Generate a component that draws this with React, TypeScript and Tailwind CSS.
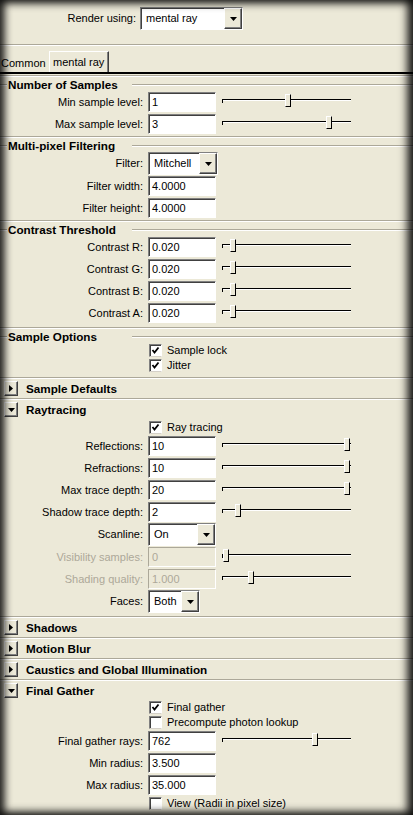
import React from "react";

function Etched({ className = "" }: { className?: string }) {
  return <div className={`h-[2px] border-t border-b border-t-[#aca899] border-b-white ${className}`} />;
}

function DownTri() {
  return (
    <svg width="7" height="4" viewBox="0 0 7 4">
      <polygon points="0,0 7,0 3.5,4" fill="#000" />
    </svg>
  );
}

function RightTri() {
  return (
    <svg width="4" height="7" viewBox="0 0 4 7">
      <polygon points="0,0 4,3.5 0,7" fill="#000" />
    </svg>
  );
}

function Field({ value, disabled = false }: { value: string; disabled?: boolean }) {
  return (
    <div
      className={
        disabled
          ? "w-[68px] h-[20px] border border-t-[#aca899] border-l-[#aca899] border-r-white border-b-white bg-[#ece9d8] text-[#aca899] pl-[3px] flex items-center text-[11px] leading-none"
          : "w-[68px] h-[20px] border border-t-[#808080] border-l-[#808080] border-r-white border-b-white shadow-[inset_1px_1px_0_#404040] bg-white text-black pl-[3px] flex items-center text-[11px] leading-none"
      }
    >
      {value}
    </div>
  );
}

function Select({ value, w }: { value: string; w: string }) {
  return (
    <div
      className={`${w} h-[23px] flex border border-t-[#808080] border-l-[#808080] border-r-white border-b-white shadow-[inset_1px_1px_0_#404040] bg-white`}
    >
      <span className="flex-1 pl-[5px] flex items-center text-[11px] leading-none">{value}</span>
      <span className="w-[18px] h-full bg-[#ece9d8] border border-t-white border-l-white border-r-[#404040] border-b-[#404040] shadow-[inset_-1px_-1px_0_#808080] flex items-center justify-center">
        <DownTri />
      </span>
    </div>
  );
}

function Slider({ pos }: { pos: number }) {
  return (
    <div className="relative w-[129px] h-[22px] ml-[6px]">
      <div className="absolute left-0 right-0 top-[8px] h-[1px] bg-black" />
      <div className="absolute left-0 right-0 top-[9px] h-[1px] bg-white" />
      <div className="absolute left-0 top-[8px] w-[1px] h-[4px] bg-black" />
      <div
        className="absolute top-[3px] w-[6px] h-[13px] bg-[#ece9d8] border border-t-white border-l-white border-r-black border-b-black"
        style={{ left: pos }}
      />
    </div>
  );
}

function Row({
  label,
  disabled = false,
  tall = false,
  children,
}: {
  label: string;
  disabled?: boolean;
  tall?: boolean;
  children: React.ReactNode;
}) {
  return (
    <div className={tall ? "h-[23px] flex items-center" : "h-[22px] flex items-center"}>
      <div
        className={
          disabled
            ? "w-[144px] pr-[1px] text-right text-[11px] leading-none text-[#aca899]"
            : "w-[144px] pr-[1px] text-right text-[11px] leading-none text-black"
        }
      >
        {label}
      </div>
      <div className="ml-[4px] flex items-center">{children}</div>
    </div>
  );
}

function Check({ label, checked }: { label: string; checked: boolean }) {
  return (
    <div className="h-[15px] flex items-center">
      <div className="ml-[149px] w-[13px] h-[13px] bg-white border border-t-[#808080] border-l-[#808080] border-r-white border-b-[#d4d0c8] shadow-[inset_1px_1px_0_#404040] flex items-center justify-center">
        {checked && (
          <svg width="9" height="9" viewBox="0 0 9 9">
            <polyline points="1.5,4 3.5,6.5 7.5,1.5" fill="none" stroke="#000" strokeWidth="1.8" />
          </svg>
        )}
      </div>
      <span className="ml-[5px] text-[11px] leading-none text-black">{label}</span>
    </div>
  );
}

function Group({
  title,
  pt,
  pb,
  children,
}: {
  title: string;
  pt: string;
  pb: string;
  children: React.ReactNode;
}) {
  return (
    <div className={pt}>
      <div className="h-[12px] flex items-center">
        <Etched className="w-[7px]" />
        <div className="w-[125px] pl-[1px] font-bold text-[11.7px] leading-none text-black">{title}</div>
        <Etched className="flex-1" />
      </div>
      {children}
      <div className={pb} />
      <Etched />
    </div>
  );
}

function Collapse({ title, open }: { title: string; open: boolean }) {
  return (
    <div>
      <Etched />
      <div className="h-[19px] flex items-center">
        <div className="ml-[4px] w-[14px] h-[15px] bg-[#ece9d8] border border-t-white border-l-white border-r-[#404040] border-b-[#404040] shadow-[inset_-1px_-1px_0_#808080] flex items-center justify-center">
          {open ? <DownTri /> : <RightTri />}
        </div>
        <span className="ml-[8px] font-bold text-[11.7px] leading-none text-black">{title}</span>
      </div>
    </div>
  );
}

export default function App() {
  return (
    <div className="relative w-[413px] h-[815px] overflow-hidden bg-[#ece9d8] font-['Liberation_Sans',Arial,sans-serif] text-black">
      {/* Render using */}
      <div className="h-[44px] pt-[7px] flex items-start">
        <div className="w-[136px] h-[23px] flex items-center justify-end text-[11px] leading-none">Render using:</div>
        <div className="ml-[4px]">
          <Select value="mental ray" w="w-[103px]" />
        </div>
      </div>
      <Etched />
      {/* Tabs */}
      <div className="h-[26px] flex items-end">
        <div className="w-[49px] h-[18px] pl-[1px] flex items-center text-[11px] leading-none">Common</div>
        <div className="h-[21px] pl-[3px] pr-[4px] flex items-center border-t border-l border-r border-t-white border-l-white border-r-[#404040] shadow-[inset_-1px_0_0_#808080] text-[11px] leading-none">
          mental ray
        </div>
      </div>
      <div className="h-[2px] bg-black" />
      <div className="h-[1px]" />
      <Etched />

      <Group title="Number of Samples" pt="pt-[2px]" pb="h-[1px]">
        <Row label="Min sample level:">
          <Field value="1" />
          <Slider pos={63} />
        </Row>
        <Row label="Max sample level:">
          <Field value="3" />
          <Slider pos={104} />
        </Row>
      </Group>

      <Group title="Multi-pixel Filtering" pt="pt-[2px]" pb="h-[1px]">
        <Row label="Filter:" tall>
          <Select value="Mitchell" w="w-[70px]" />
        </Row>
        <Row label="Filter width:">
          <Field value="4.0000" />
        </Row>
        <Row label="Filter height:">
          <Field value="4.0000" />
        </Row>
      </Group>

      <Group title="Contrast Threshold" pt="pt-[2px]" pb="h-[3px]">
        <Row label="Contrast R:">
          <Field value="0.020" />
          <Slider pos={8} />
        </Row>
        <Row label="Contrast G:">
          <Field value="0.020" />
          <Slider pos={8} />
        </Row>
        <Row label="Contrast B:">
          <Field value="0.020" />
          <Slider pos={8} />
        </Row>
        <Row label="Contrast A:">
          <Field value="0.020" />
          <Slider pos={8} />
        </Row>
      </Group>

      <Group title="Sample Options" pt="pt-[2px]" pb="h-[4px]">
        <Check label="Sample lock" checked />
        <Check label="Jitter" checked />
      </Group>

      <div className="-mt-[2px]">
        <Collapse title="Sample Defaults" open={false} />
        <Collapse title="Raytracing" open />
      </div>
      <div>
        <div className="h-[1px]" />
        <Check label="Ray tracing" checked />
        <Row label="Reflections:">
          <Field value="10" />
          <Slider pos={122} />
        </Row>
        <Row label="Refractions:">
          <Field value="10" />
          <Slider pos={122} />
        </Row>
        <Row label="Max trace depth:">
          <Field value="20" />
          <Slider pos={122} />
        </Row>
        <Row label="Shadow trace depth:">
          <Field value="2" />
          <Slider pos={13} />
        </Row>
        <Row label="Scanline:" tall>
          <Select value="On" w="w-[68px]" />
        </Row>
        <Row label="Visibility samples:" disabled>
          <Field value="0" disabled />
          <Slider pos={1} />
        </Row>
        <Row label="Shading quality:" disabled>
          <Field value="1.000" disabled />
          <Slider pos={26} />
        </Row>
        <Row label="Faces:" tall>
          <Select value="Both" w="w-[52px]" />
        </Row>
        <div className="h-[3px]" />
      </div>

      <Collapse title="Shadows" open={false} />
      <Collapse title="Motion Blur" open={false} />
      <Collapse title="Caustics and Global Illumination" open={false} />
      <Collapse title="Final Gather" open />
      <div>
        <Check label="Final gather" checked />
        <Check label="Precompute photon lookup" checked={false} />
        <Row label="Final gather rays:">
          <Field value="762" />
          <Slider pos={90} />
        </Row>
        <Row label="Min radius:">
          <Field value="3.500" />
        </Row>
        <Row label="Max radius:">
          <Field value="35.000" />
        </Row>
        <Check label="View (Radii in pixel size)" checked={false} />
      </div>

      {/* vignette */}
      <div className="pointer-events-none absolute inset-0 shadow-[inset_0_0_9px_3px_rgba(0,0,0,0.85),inset_-8px_0_10px_-2px_rgba(0,0,0,0.55),inset_6px_0_8px_-2px_rgba(0,0,0,0.45)]" />
    </div>
  );
}
